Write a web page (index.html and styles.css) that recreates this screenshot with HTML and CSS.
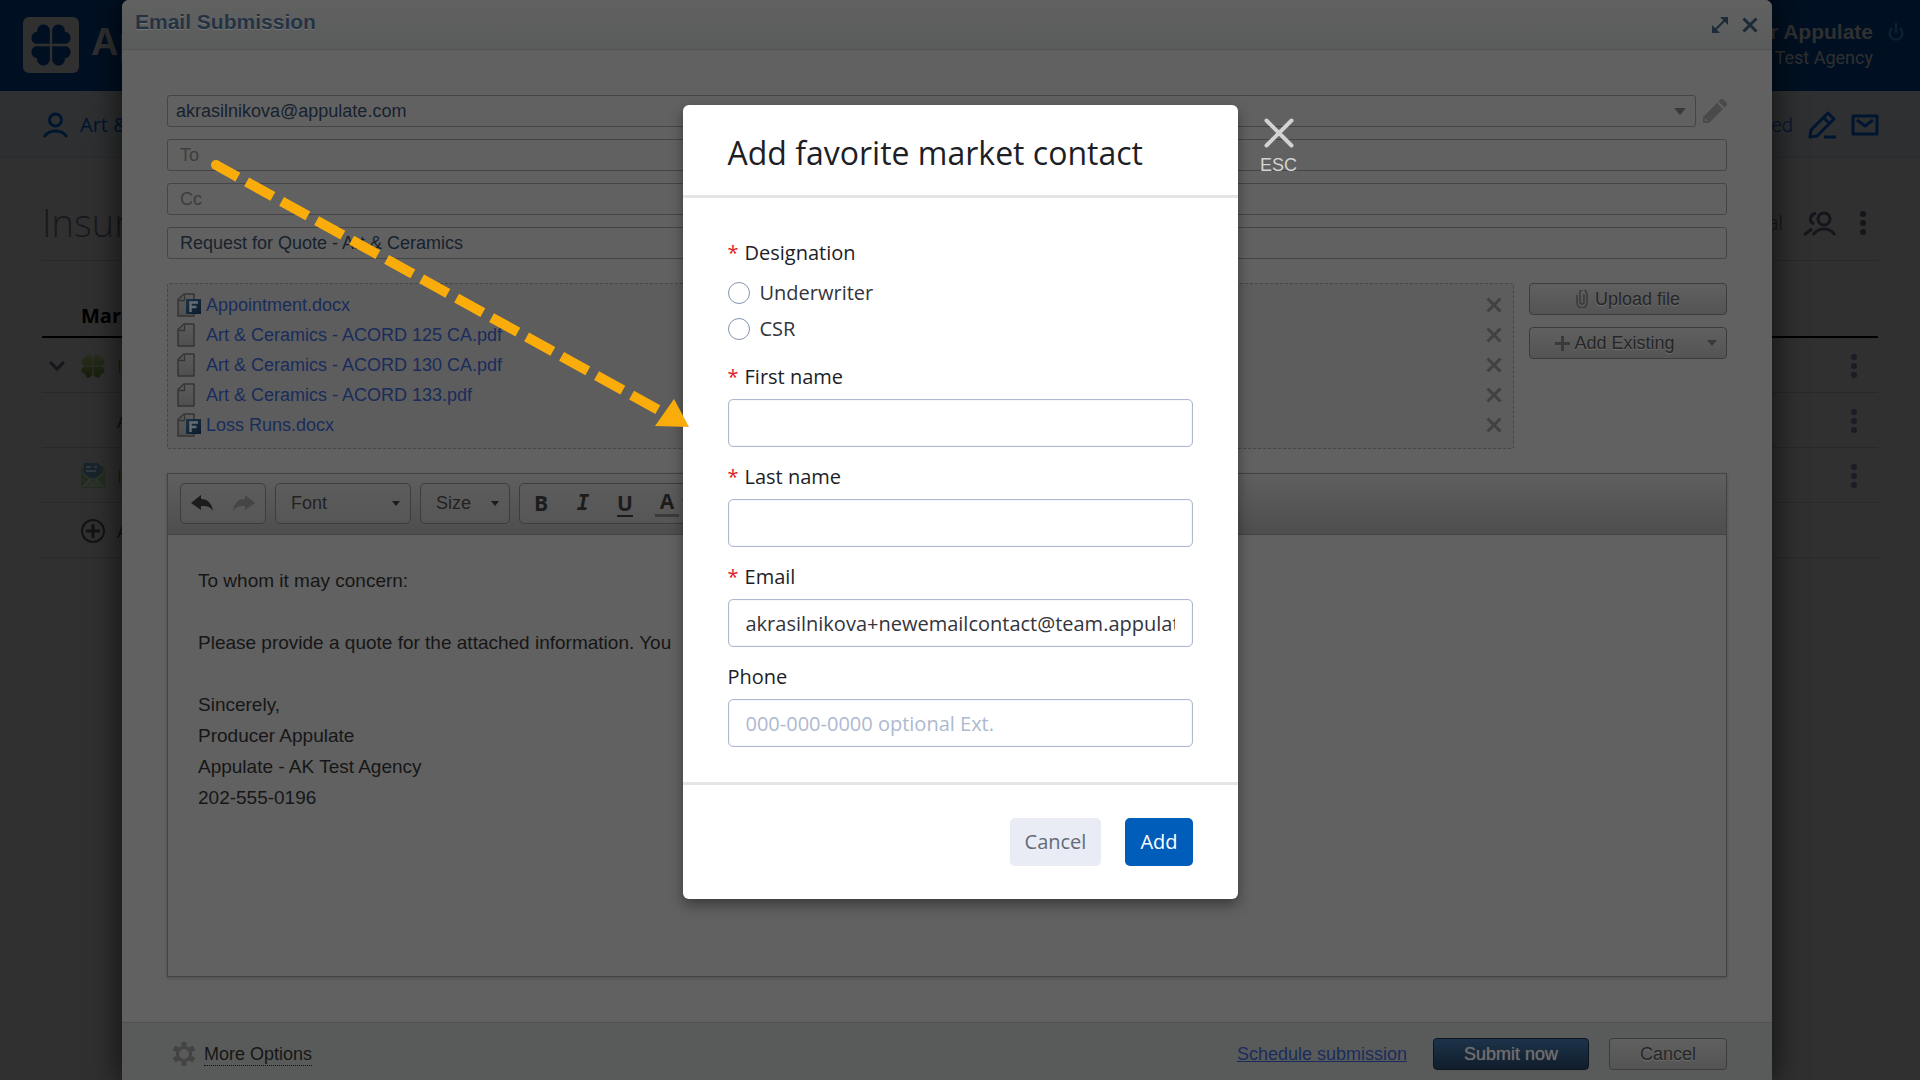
FILE: index.html
```html
<!DOCTYPE html>
<html lang="en">
<head>
<meta charset="utf-8">
<title>Email Submission</title>
<link rel="stylesheet" href="styles.css">
</head>
<body>
<svg class="sprite" aria-hidden="true">
  <linearGradient id="leaf" x1="0" y1="0" x2="0" y2="1"><stop offset="0" stop-color="#272e1d"/><stop offset="1" stop-color="#171f0c"/></linearGradient>
  <linearGradient id="badge" x1="0" y1="0" x2="1" y2="1"><stop offset="0" stop-color="#1e3347"/><stop offset="1" stop-color="#0b1a2c"/></linearGradient>
  <linearGradient id="paper" x1="0" y1="0" x2="0" y2="1"><stop offset="0" stop-color="#5c5c5c"/><stop offset="1" stop-color="#4f4f4f"/></linearGradient>
  <symbol id="clover" viewBox="0 0 38 38">
    <path d="M18 18V6a5.5 5.5 0 0 0-11 1.500A5.500 5.500 0 0 0 5.500 18zM20 18h12.500A5.500 5.500 0 0 0 31 7.500 5.500 5.500 0 0 0 20 6zM18 20H5.500A5.500 5.500 0 0 0 7 30.500 5.500 5.500 0 0 0 18 32zM20 20v12a5.500 5.500 0 0 0 11-1.500A5.500 5.500 0 0 0 32.500 20z"/>
  </symbol>
  <symbol id="dots" viewBox="0 0 6 24"><circle cx="3" cy="3" r="3"/><circle cx="3" cy="12" r="3"/><circle cx="3" cy="21" r="3"/></symbol>
  <symbol id="file" viewBox="0 0 24 24">
    <path d="M1 6.500 7 1h10v22H1z" fill="url(#paper)" stroke="#353535" stroke-width="1.500" stroke-linejoin="round"/>
    <path d="M2 7.500h5.500V2" fill="none" stroke="#353535" stroke-width="1.300"/>
  </symbol>
  <symbol id="file-f" viewBox="0 0 24 24">
    <use href="#file"/>
    <rect x="9" y="6" width="15" height="15" fill="url(#badge)"/>
    <path d="M13.500 19V9.500H21M13.500 14h6" fill="none" stroke="#656c72" stroke-width="2.500"/>
  </symbol>
  <symbol id="cross" viewBox="0 0 16 16"><path d="M1.500 1.500l13 13M14.500 1.500l-13 13" fill="none" stroke="currentColor" stroke-width="3"/></symbol>
  <symbol id="caret" viewBox="0 0 10 6"><path d="M0 0h10L5 6z" fill="currentColor"/></symbol>
</svg>

<div class="app">
  <header class="app-header">
    <div class="brand">
      <span class="brand-mark"><svg width="44" height="44"><use href="#clover"/></svg></span>
      <span class="brand-name">Ap</span>
    </div>
    <div class="account">
      <div class="account-text"><strong>r Appulate</strong><span>Test Agency</span></div>
      <svg class="power" width="16" height="20" viewBox="0 0 16 20" fill="none" stroke="currentColor" stroke-width="2.500"><path d="M4 6a6.500 6.500 0 1 0 8 0M8 1v10"/></svg>
    </div>
  </header>
  <div class="app-bar">
    <div class="bar-group">
      <svg width="27" height="27" viewBox="0 0 27 27" fill="none" stroke="currentColor" stroke-width="3"><circle cx="13.500" cy="8" r="6"/><path d="M2 25c5-8 18-8 23 0"/></svg>
      <span>Art &amp;</span>
    </div>
    <div class="bar-group bar-right">
      <span>ed</span>
      <svg width="28" height="28" viewBox="0 0 28 28" fill="none" stroke="currentColor" stroke-width="3" stroke-linejoin="round"><path d="M2 26l1-7L20 2l6 6L9 25zM16 7l6 6M16 26h12"/></svg>
      <svg width="28" height="22" viewBox="0 0 28 22" fill="none" stroke="currentColor" stroke-width="3" stroke-linejoin="round"><rect x="2" y="2" width="24" height="18"/><path d="M6 6l8 6 8-6"/></svg>
    </div>
  </div>
  <main class="app-main">
    <div class="title-row">
      <h1>Insur</h1>
      <div class="title-tools">
        <span>al</span>
        <svg width="34" height="25" viewBox="0 0 34 25" fill="none" stroke="currentColor" stroke-width="3"><circle cx="21" cy="8" r="6"/><path d="M10 24c5-8 17-8 22 0M13 2c-7 2-7 9-2 11M1 24l8-6"/></svg>
        <svg width="6" height="24"><use href="#dots"/></svg>
      </div>
    </div>
    <table class="markets">
      <thead><tr><th class="c-toggle"></th><th class="c-icon"></th><th class="c-name">Mar</th><th class="c-menu"></th></tr></thead>
      <tbody>
        <tr>
          <td class="c-toggle"><svg width="16" height="10" viewBox="0 0 16 10" fill="none" stroke="#15161d" stroke-width="3"><path d="M1 1l7 7 7-7"/></svg></td>
          <td class="c-icon"><svg width="24" height="24" viewBox="0 0 24 24" fill="url(#leaf)"><path d="M11.500 11.500V3L9 .500H5.500L4 4 .500 5.500V9L3 11.500zM12.500 11.500V3L15 .500h3.500L20 4l3.500 1.500V9L21 11.500zM11.500 12.500V21L9 23.500H5.500L4 20 .500 18.500V15L3 12.500zM12.500 12.500V21l2.500 2.500h3.500L20 20l3.500-1.500V15L21 12.500z"/></svg></td>
          <td class="c-name olive">I</td>
          <td class="c-menu"><svg width="6" height="24"><use href="#dots"/></svg></td>
        </tr>
        <tr>
          <td></td><td></td><td class="c-name">A</td>
          <td class="c-menu"><svg width="6" height="24"><use href="#dots"/></svg></td>
        </tr>
        <tr>
          <td></td>
          <td class="c-icon"><svg width="24" height="25" viewBox="0 0 24 25"><path d="M0 6l3-3h18l3 3v19H0z" fill="#242c20"/><path d="M1 24l8-8h6l8 8z" fill="#2b3228"/><path d="M3 0h13l5 4v6l-9 8-9-8z" fill="#18242c"/><path d="M5 4h5M5 8h10M13 4h3" stroke="#30383d" stroke-width="2"/><path d="M1 24l8-8h6l8 8M1 10l8 6M23 10l-8 6" fill="none" stroke="#353c31"/></svg></td>
          <td class="c-name olive">I</td>
          <td class="c-menu"><svg width="6" height="24"><use href="#dots"/></svg></td>
        </tr>
        <tr>
          <td></td>
          <td class="c-icon"><svg width="24" height="24" viewBox="0 0 24 24" fill="none" stroke="#131313"><circle cx="12" cy="12" r="11" stroke-width="2"/><path d="M12 5v14M5 12h14" stroke-width="3"/></svg></td>
          <td class="c-name">A</td><td></td>
        </tr>
      </tbody>
    </table>
  </main>
</div>

<div class="submission-layer">
  <section class="submission" aria-label="Email Submission">
    <header class="sub-header">
      <h2>Email Submission</h2>
      <button type="button" aria-label="Expand"><svg width="16" height="16" viewBox="0 0 16 16"><path d="M8 0h8v8zM0 8v8h8z" fill="currentColor"/><path d="M3 13L13 3" stroke="currentColor" stroke-width="2"/></svg></button>
      <button type="button" aria-label="Close"><svg width="16" height="16"><use href="#cross"/></svg></button>
    </header>

    <div class="sub-body">
      <div class="from-row">
        <div class="select-wrap from-wrap">
          <select class="field from" aria-label="From"><option>akrasilnikova@appulate.com</option></select>
          <svg width="12" height="7"><use href="#caret"/></svg>
        </div>
        <button type="button" class="edit" aria-label="Edit"><svg width="24" height="24" viewBox="0 0 24 24" fill="currentColor"><path d="M0 18L14 4l6 6L6 24H0zM15.500 2.500L18 0h2l4 4v2l-2.500 2.500z"/><path d="M2 19v3h3z" fill="#616161"/></svg></button>
      </div>
      <input class="field" type="text" placeholder="To" aria-label="To">
      <input class="field" type="text" placeholder="Cc" aria-label="Cc">
      <input class="field" type="text" value="Request for Quote - Art &amp; Ceramics" aria-label="Subject">

      <div class="files-row">
        <ul class="files">
          <li><svg width="24" height="24"><use href="#file-f"/></svg><a href="#">Appointment.docx</a><button type="button" aria-label="Remove"><svg width="16" height="16"><use href="#cross"/></svg></button></li>
          <li><svg width="24" height="24"><use href="#file"/></svg><a href="#">Art &amp; Ceramics - ACORD 125 CA.pdf</a><button type="button" aria-label="Remove"><svg width="16" height="16"><use href="#cross"/></svg></button></li>
          <li><svg width="24" height="24"><use href="#file"/></svg><a href="#">Art &amp; Ceramics - ACORD 130 CA.pdf</a><button type="button" aria-label="Remove"><svg width="16" height="16"><use href="#cross"/></svg></button></li>
          <li><svg width="24" height="24"><use href="#file"/></svg><a href="#">Art &amp; Ceramics - ACORD 133.pdf</a><button type="button" aria-label="Remove"><svg width="16" height="16"><use href="#cross"/></svg></button></li>
          <li><svg width="24" height="24"><use href="#file-f"/></svg><a href="#">Loss Runs.docx</a><button type="button" aria-label="Remove"><svg width="16" height="16"><use href="#cross"/></svg></button></li>
        </ul>
        <div class="file-actions">
          <button type="button" class="btn"><svg width="12" height="18" viewBox="0 0 12 18" fill="none" stroke="#3a3a3a" stroke-width="1.500"><path d="M8 4v8a2 2 0 0 1-4 0V3a2 2 0 0 1 6-1l1 2v9a5 5 0 0 1-10 0V5"/></svg>Upload file</button>
          <button type="button" class="btn existing"><span><svg width="15" height="15" viewBox="0 0 15 15" stroke="#3a3a3a" stroke-width="3"><path d="M7.500 0v15M0 7.500h15"/></svg>Add Existing</span><svg width="10" height="6"><use href="#caret"/></svg></button>
        </div>
      </div>

      <div class="editor">
        <div class="toolbar">
          <div class="tool-group history">
            <button type="button" aria-label="Undo"><svg width="22" height="17" viewBox="0 0 22 17" fill="currentColor"><path d="M0 8l10-8v4c7 0 11 5 12 12-3-5-7-5-12-5v4z"/></svg></button>
            <button type="button" class="off" aria-label="Redo"><svg width="22" height="17" viewBox="0 0 22 17" fill="currentColor"><path d="M22 8L12 0v4C5 4 1 9 0 16c3-5 7-5 12-5v4z"/></svg></button>
          </div>
          <div class="tool-group select-wrap font"><select aria-label="Font"><option>Font</option></select><svg width="8" height="5" viewBox="0 0 10 6"><use href="#caret"/></svg></div>
          <div class="tool-group select-wrap size"><select aria-label="Size"><option>Size</option></select><svg width="8" height="5" viewBox="0 0 10 6"><use href="#caret"/></svg></div>
          <div class="tool-group styles">
            <button type="button" class="bold">B</button>
            <button type="button" class="italic">I</button>
            <button type="button" class="under">U</button>
            <button type="button" class="color"><span>A</span><svg width="8" height="5" viewBox="0 0 10 6"><use href="#caret"/></svg></button>
          </div>
        </div>
        <textarea aria-label="Message">To whom it may concern:

Please provide a quote for the attached information. You

Sincerely,
Producer Appulate
Appulate - AK Test Agency
202-555-0196</textarea>
      </div>
    </div>

    <footer class="sub-footer">
      <svg class="gear" width="24" height="24" viewBox="0 0 24 24"><path d="M9.500 0h5v4l2.500 1.500 3.500-2 3 4.500-3.500 2v4l3.500 2-3 4.500-3.500-2-2.500 1.500v4h-5v-4L7 18.500l-3.500 2L.500 16 4 14v-4L.500 8l3-4.500 3.500 2L9.500 4zM12 7a5 5 0 1 0 0 10 5 5 0 0 0 0-10z" fill="#444" fill-rule="evenodd"/></svg>
      <a class="more" href="#">More Options</a>
      <a class="schedule" href="#">Schedule submission</a>
      <button type="button" class="btn submit">Submit now</button>
      <button type="button" class="btn cancel">Cancel</button>
    </footer>
  </section>
</div>

<div class="modal-layer">
  <form class="modal">
    <h2>Add favorite market contact</h2>
    <div class="modal-body">
      <fieldset>
        <legend class="label required">Designation</legend>
        <label class="radio"><input type="radio" name="designation">Underwriter</label>
        <label class="radio"><input type="radio" name="designation">CSR</label>
      </fieldset>
      <div class="row"><label class="label required" for="first">First name</label><input id="first" type="text"></div>
      <div class="row"><label class="label required" for="last">Last name</label><input id="last" type="text"></div>
      <div class="row"><label class="label required" for="email">Email</label><input id="email" type="text" value="akrasilnikova+newemailcontact@team.appulate.com"></div>
      <div class="row"><label class="label" for="phone">Phone</label><input id="phone" type="text" placeholder="000-000-0000 optional Ext."></div>
    </div>
    <div class="modal-footer">
      <button type="button" class="m-cancel">Cancel</button>
      <button type="button" class="m-add">Add</button>
    </div>
    <button type="button" class="esc"><svg width="30" height="30" viewBox="0 0 30 30" fill="none" stroke="currentColor" stroke-width="4" stroke-linecap="round"><path d="M2.500 2.500l25 25M27.500 2.500l-25 25"/></svg>ESC</button>
  </form>
  <svg class="pointer" width="700" height="440" viewBox="0 0 700 440" aria-hidden="true">
    <circle cx="216" cy="165" r="5" fill="#faad0a"/>
    <path d="M216 165L664 413" stroke="#faad0a" stroke-width="10" stroke-dasharray="30 10" stroke-dashoffset="5"/>
    <path d="M674 399L689 427L655 426z" fill="#faad0a"/>
  </svg>
</div>
</body>
</html>
```
FILE: styles.css
```css
* { box-sizing: border-box; }
body {
  margin: 0;
  position: relative;
  min-height: 100vh;
  overflow: hidden;
  background: #303030;
  color: #111;
  font: 18px/24px "Liberation Sans", Arial, sans-serif;
}
button, input, select, textarea { font: inherit; color: inherit; margin: 0; }
button { padding: 0; border: 0; background: none; }
svg { display: block; flex: none; }
.sprite { position: absolute; width: 0; height: 0; }

/* application behind the dialogs */
.app-header {
  display: flex;
  justify-content: space-between;
  height: 91px;
  padding: 17px 16px 0 23px;
  background: #001022;
}
.brand { display: flex; gap: 12px; }
.brand-mark {
  display: grid;
  place-items: center;
  width: 56px;
  height: 56px;
  border-radius: 6px;
  background: #303030;
  fill: #001022;
}
.brand-name { font-size: 38px; line-height: 50px; font-weight: bold; color: #303030; }
.account { display: flex; gap: 15px; font-family: Roboto, sans-serif; color: #303030; }
.account-text { display: flex; flex-direction: column; align-items: flex-end; padding-top: 2px; line-height: 26px; }
.account-text strong { font: bold 21px/26px "Liberation Sans", Arial, sans-serif; }
.power { margin-top: 5px; color: #0c1f33; }
.app-bar {
  display: flex;
  justify-content: space-between;
  align-items: center;
  height: 67px;
  padding: 2px 41px 0 42px;
  border-bottom: 1px solid #2a2b2d;
  background: linear-gradient(#2f3031, #2d2f30);
  color: #001530;
}
.bar-group { display: flex; align-items: center; gap: 11px; font-family: "Open Sans", sans-serif; font-size: 20px; }
.bar-right { gap: 15px; font-family: Roboto, sans-serif; font-weight: 300; }
.app-main { padding: 0 42px; }
.title-row {
  display: flex;
  justify-content: space-between;
  align-items: center;
  height: 103px;
  padding-top: 28px;
  border-bottom: 1px solid #292929;
}
.title-row h1 { margin: 0; font: 300 38px/50px "Open Sans", sans-serif; color: #18191d; padding-bottom: 2px; }
.title-tools { display: flex; align-items: center; gap: 20px; padding: 0 12px 0 0; font-family: Roboto, sans-serif; font-size: 20px; font-weight: 300; color: #15161b; fill: #15161b; }
.title-tools svg:last-child { margin-left: 3px; }
.markets { width: 100%; border-collapse: collapse; table-layout: fixed; font-family: "Open Sans", sans-serif; }
.markets th { height: 76px; padding: 34px 0 0; text-align: left; font-size: 20px; color: #000; border-bottom: 2px solid #000; }
.markets td { height: 55px; padding: 2px 0 0; border-bottom: 1px solid #292929; }
.markets .c-toggle { width: 39px; padding-left: 7px; }
.markets .c-icon { width: 36px; }
.markets th.c-name { text-indent: -36px; }
.markets .c-menu { width: 27px; fill: #1b1c26; }
.olive { color: #22200b; }

/* email submission dialog */
.submission-layer { position: absolute; inset: 0; padding: 0 148px 0 122px; }
.submission {
  display: flex;
  flex-direction: column;
  min-height: 100vh;
  border-radius: 7px 7px 0 0;
  background: #616161;
  box-shadow: 0 0 30px 4px rgba(0, 0, 0, 0.6);
}
.sub-header {
  display: flex;
  align-items: center;
  gap: 14px;
  height: 50px;
  padding: 0 14px 0 13px;
  border-bottom: 1px solid #535556;
  border-radius: 7px 7px 0 0;
  background: linear-gradient(#616161, #5a5c5b);
  color: #1d2a38;
}
.sub-header h2 { flex: 1; margin: 0; padding-bottom: 6px; font-size: 21px; line-height: 24px; color: #243344; text-shadow: 0 1px 1px #777; }
.sub-body { flex: 1; display: flex; flex-direction: column; gap: 12px; padding: 45px 45px 45px; }
.field {
  width: 100%;
  height: 32px;
  padding: 0 12px;
  border: 1px solid #454545;
  border-radius: 3px;
  background: transparent;
  color: #17222e;
}
.field::placeholder { color: #3d3d3d; opacity: 1; }
.from-row { display: flex; align-items: center; gap: 7px; }
.from-row .edit { color: #4a4a4a; }
.select-wrap { position: relative; }
.select-wrap select { appearance: none; outline: 0; }
.select-wrap svg { position: absolute; right: 10px; top: 50%; margin-top: -3px; color: #3a3a3a; pointer-events: none; }
.from-wrap { flex: 1; }
.field.from { padding: 0 8px; }
.files-row { display: flex; align-items: flex-start; gap: 15px; margin-top: 12px; }
.files {
  flex: 1;
  margin: 0;
  padding: 6px 11px 8px 9px;
  list-style: none;
  border: 1px dashed #464646;
  border-radius: 3px;
  background: #5d5d5d;
}
.files li { display: flex; align-items: center; gap: 5px; height: 30px; }
.files a { flex: 1; color: #192c5c; text-decoration: none; }
.files button { color: #414141; }
.file-actions { display: flex; flex-direction: column; gap: 12px; width: 198px; }
.btn {
  display: flex;
  align-items: center;
  justify-content: center;
  gap: 7px;
  height: 32px;
  border: 1px solid #3c3c3c;
  border-radius: 4px;
  background: linear-gradient(#606060, #545454);
  color: #262626;
  text-shadow: 0 1px 1px #707070;
}
.existing { padding: 0 9px 0 0; }
.existing span { flex: 1; display: flex; align-items: center; justify-content: center; gap: 4px; }
.existing > svg { color: #3a3a3a; }
.editor {
  flex: 1;
  display: flex;
  flex-direction: column;
  margin-top: 12px;
  border: 1px solid #434343;
  box-shadow: 0 1px 3px rgba(0, 0, 0, 0.2);
}
.toolbar {
  display: flex;
  gap: 9px;
  height: 61px;
  padding: 9px 12px;
  border-bottom: 1px solid #434343;
  background: linear-gradient(#5f5f5f, #4e4e4e);
  color: #1c1c1c;
}
.tool-group { height: 41px; border: 1px solid #3d3d3d; border-radius: 5px; background: linear-gradient(#5c5c5c, #565656); }
.tool-group select { width: 100%; height: 100%; padding: 0 15px 1px; border: 0; background: none; color: #222; }
.tool-group svg { color: #1c1c1c; }
.history { display: flex; align-items: center; justify-content: space-between; width: 86px; padding: 0 10px; }
.history .off svg { color: #454545; }
.font { width: 136px; }
.size { width: 90px; }
.styles { display: flex; width: 240px; padding: 0 0 2px; font: bold 21px/34px "Open Sans", sans-serif; }
.styles button { width: 42px; text-align: center; }
.styles .italic { font-family: "DejaVu Sans Mono", monospace; font-style: italic; }
.styles .under { text-decoration: underline; text-underline-offset: 4px; text-decoration-thickness: 2px; }
.styles .color { display: flex; align-items: center; gap: 3px; width: 54px; padding-left: 9px; }
.color span { width: 24px; line-height: 25px; border-bottom: 3px solid #3a3a3a; }
.editor textarea {
  flex: 1;
  width: 100%;
  padding: 30px;
  border: 0;
  outline: 0;
  resize: none;
  overflow: hidden;
  background: transparent;
  color: #161616;
  font-size: 19px;
  line-height: 31px;
}
.sub-footer {
  display: flex;
  align-items: center;
  height: 58px;
  padding: 5px 45px 0 50px;
  border-top: 1px solid #505252;
  background: #595b5a;
}
.more { margin: 0 auto 0 8px; color: #161616; text-decoration: none; line-height: 22px; border-bottom: 1px dotted #111; }
.schedule { margin-right: 26px; color: #1b2c5c; }
.submit { width: 156px; margin-right: 20px; border-color: #0b151f; background: linear-gradient(#1d334a, #101d2b); color: #6d6d6d; text-shadow: 0 0 1px #6d6d6d; }
.cancel { width: 118px; }

/* contact modal */
.modal-layer {
  position: absolute;
  inset: 0;
  padding-top: 105px;
  font-family: "Open Sans", sans-serif;
}
.modal {
  position: relative;
  width: 555px;
  margin: 0 auto;
  border-radius: 6px;
  background: #fff;
  color: #1d1e26;
  font-size: 20px;
  box-shadow: 0 6px 14px rgba(0, 0, 0, 0.4);
}
.modal h2 { margin: 0; padding: 27px 45px 21px; border-bottom: 3px solid #e5e5e5; font-size: 32px; line-height: 42px; font-weight: 500; }
.modal-body { padding: 41px 45px 35px; }
fieldset { margin: 0 0 16px; padding: 0; border: 0; }
.label { display: block; padding: 0; line-height: 28px; font-weight: 500; }
legend.label { margin-bottom: 8px; }
.required::before { content: "*"; margin-right: 6px; color: #e0202a; }
.radio { display: flex; align-items: center; gap: 10px; height: 36px; color: #33343c; }
.radio input { appearance: none; width: 22px; height: 22px; margin: 0; border: 1px solid #8494b0; border-radius: 50%; background: #fff; }
.row { margin-bottom: 16px; }
.row:last-child { margin-bottom: 0; }
.row input { display: block; width: 100%; height: 48px; margin-top: 8px; padding: 0 17px; border: 1px solid #adb9d0; border-radius: 5px; box-shadow: inset 0 0 1px #adb9d0; background: #fff; color: #33343c; }
.row input::placeholder { color: #adb9d0; opacity: 1; }
.modal-footer { display: flex; justify-content: flex-end; gap: 24px; padding: 33px 45px; border-top: 3px solid #e5e5e5; }
.modal-footer button { height: 48px; padding: 0 15px; border-radius: 5px; }
.m-cancel { background: #e9ecf5; color: #646b78; }
.m-add { background: #005dba; color: #fff; font-weight: 500; }
.esc {
  position: absolute;
  left: 100%;
  top: 13px;
  display: flex;
  flex-direction: column;
  align-items: center;
  gap: 5px;
  width: 82px;
  color: #d2d2d2;
  font: 18px/24px "Liberation Sans", Arial, sans-serif;
}
.pointer { position: absolute; left: 0; top: 0; pointer-events: none; }
```
